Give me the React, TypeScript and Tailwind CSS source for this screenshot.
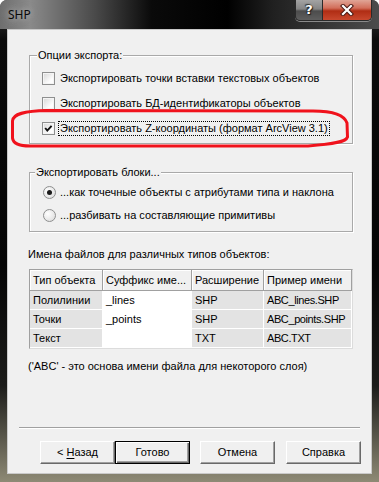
import React from 'react';

const CheckBox = ({ checked }: { checked?: boolean }) => (
  <span className="flex h-[13px] w-[13px] shrink-0 items-center justify-center border border-[#8e8f8f] bg-[linear-gradient(135deg,#d6d6d6,#fdfdfd_70%)] shadow-[inset_0_0_0_1px_#f4f4f4]">
    {checked && (
      <svg width="11" height="11" viewBox="0 0 11 11">
        <polyline points="2.2,5 4.3,7.6 8.6,2.8" fill="none" stroke="#111" strokeWidth="1.9" />
      </svg>
    )}
  </span>
);

const Radio = ({ checked }: { checked?: boolean }) => (
  <span className="flex h-[13px] w-[13px] shrink-0 items-center justify-center rounded-full border border-[#8e8f8f] bg-[radial-gradient(circle_at_35%_35%,#ffffff,#d8d8d8)]">
    {checked && <span className="h-[5px] w-[5px] rounded-full bg-[#1a1a1a]" />}
  </span>
);

const GroupBox = ({ title, indent, children, className }: { title: string; indent: string; children: React.ReactNode; className?: string }) => (
  <div className={`mx-[21px] w-[324px] border border-[#a9a9a9] shadow-[inset_1px_1px_0_#fff,1px_1px_0_#fff] ${className ?? ''}`}>
    <span className={`-mt-[7px] block w-fit bg-[#f0f0f0] px-[1px] leading-[13px] ${indent}`}>{title}</span>
    {children}
  </div>
);

const Button = ({ children, isDefault, className }: { children: React.ReactNode; isDefault?: boolean; className?: string }) => (
  <button
    className={`flex h-[23px] w-[75px] items-center justify-center bg-[#f0f0f0] ${
      isDefault
        ? 'border border-black shadow-[inset_1px_1px_0_#fff,inset_-1px_-1px_0_#696969,inset_-2px_-2px_0_#a0a0a0]'
        : 'border border-t-white border-l-white border-r-[#696969] border-b-[#696969] shadow-[inset_-1px_-1px_0_#a0a0a0]'
    } ${className ?? ''}`}
  >
    {children}
  </button>
);

const cols = ['Тип объекта', 'Суффикс име...', 'Расширение', 'Пример имени'];
const rows = [
  ['Полилинии', '_lines', 'SHP', 'ABC_lines.SHP'],
  ['Точки', '_points', 'SHP', 'ABC_points.SHP'],
  ['Текст', '', 'TXT', 'ABC.TXT'],
];

export default function App() {
  return (
    <div className="relative h-[482px] w-[379px] overflow-hidden rounded-t-[7px] bg-[linear-gradient(to_bottom,#3d3d3d_0px,#0b0b0b_40px,#050505_55%,#1c1c1a_80%,#8e8a75_100%)] font-['Liberation_Sans',Arial,sans-serif] text-[11px] text-black">
      {/* title bar */}
      <div className="flex h-[29px] bg-[linear-gradient(to_right,#6e6e6e_0%,#8a8a8a_8%,#4a4a4a_25%,#0a0a0a_40%,#000_60%,#202020_72%,#4c4c4c_100%)]">
        <span className="ml-[8px] mt-[8px] h-fit font-['Noto_Sans',sans-serif] text-[12px] leading-[14px] text-[#0a0a0a] [text-shadow:0_0_6px_#bdbdbd,0_0_10px_#9a9a9a]">
          SHP
        </span>
        <div className="ml-auto mr-[7px] flex h-[21px] overflow-hidden rounded-b-[5px] border border-t-0 border-[#2a2a2a] shadow-[0_1px_0_#8a8a8a]">
          <div className="flex w-[27px] items-center justify-center border-r border-[#2a2a2a] bg-[linear-gradient(to_bottom,#a3a3a3_0%,#858585_45%,#4c4c4c_55%,#5e5e5e_100%)] font-['DejaVu_Sans',sans-serif] text-[13px] font-bold text-white [text-shadow:0_0_1px_#000,1px_1px_1px_#222,-1px_-1px_1px_#333]">
            ?
          </div>
          <div className="flex w-[48px] items-center justify-center bg-[linear-gradient(to_bottom,#e0a596_0%,#d26e5a_40%,#b02d14_55%,#c8482e_100%)]">
            <svg width="14" height="12" viewBox="0 0 14 12">
              <path d="M3 2 L11 10 M11 2 L3 10" stroke="#4a1a14" strokeWidth="4.2" strokeLinecap="square" />
              <path d="M3 2 L11 10 M11 2 L3 10" stroke="#fff" strokeWidth="2.2" strokeLinecap="square" />
            </svg>
          </div>
        </div>
      </div>

      {/* client area */}
      <div className="mx-[7px] flex h-[445px] flex-col border border-[#c9c9c9] bg-[#f0f0f0]">
        <GroupBox title="Опции экспорта:" indent="ml-[7px]" className="mt-[25px]">
          <div className="mt-[4px] flex flex-col pb-[2px] pl-[12px]">
            <div className="flex h-[25px] items-center gap-[5px]">
              <CheckBox />
              <span>Экспортировать точки вставки текстовых объектов</span>
            </div>
            <div className="flex h-[25px] items-center gap-[5px]">
              <CheckBox />
              <span>Экспортировать БД-идентификаторы объектов</span>
            </div>
            <div className="flex h-[25px] items-center gap-[4px]">
              <CheckBox checked />
              <span className="px-[1px] leading-[13px] outline outline-1 outline-dotted outline-black">
                Экспортировать Z-координаты (формат ArcView 3.1)
              </span>
            </div>
          </div>
        </GroupBox>

        <GroupBox title="Экспортировать блоки..." indent="ml-[5px]" className="mt-[28px]">
          <div className="mt-[2px] flex flex-col pb-[4px] pl-[13px]">
            <div className="flex h-[23px] items-center gap-[4px]">
              <Radio checked />
              <span>...как точечные объекты с атрибутами типа и наклона</span>
            </div>
            <div className="flex h-[23px] items-center gap-[4px]">
              <Radio />
              <span>...разбивать на составляющие примитивы</span>
            </div>
          </div>
        </GroupBox>

        <div className="ml-[20px] mt-[16px] leading-[13px]">Имена файлов для различных типов объектов:</div>

        <div className="ml-[21px] mt-[8px] w-[324px] border border-[#a0a0a0] border-b-[#dcdcdc] border-r-[#dcdcdc]">
          <div className="grid grid-cols-[73px_89px_72px_88px]">
            {cols.map((c) => (
              <div
                key={c}
                className="flex h-[21px] items-center overflow-hidden whitespace-nowrap border-b border-r border-[#a0a0a0] bg-[#f0f0f0] pl-[3px] shadow-[inset_1px_1px_0_#fff]"
              >
                {c}
              </div>
            ))}
            {rows.map((r) =>
              r.map((c, i) => (
                <div
                  key={r[0] + i}
                  className={`flex h-[19px] items-center overflow-hidden whitespace-nowrap border-b border-r border-white pl-[3px] ${
                    i === 1 ? 'bg-white' : 'bg-[#e3e3e3]'
                  } ${i === 3 ? 'tracking-[-0.4px]' : ''}`}
                >
                  {c}
                </div>
              ))
            )}
          </div>
        </div>

        <div className="ml-[20px] mt-[11px] leading-[13px]">('ABC' - это основа имени файла для некоторого слоя)</div>

        <div className="mx-[11px] mt-auto border-t border-b border-t-[#a0a0a0] border-b-white" />

        <div className="mb-[9px] mt-[12px] flex justify-end pr-[10px]">
          <Button>
            &lt; <span className="ml-[3px] underline underline-offset-2">Н</span>азад
          </Button>
          <Button isDefault>Готово</Button>
          <Button className="ml-[10px]">Отмена</Button>
          <Button className="ml-[11px]">Справка</Button>
        </div>
      </div>

      {/* red annotation */}
      <svg className="pointer-events-none absolute inset-0" width="379" height="482" viewBox="0 0 379 482">
        <path
          d="M47 110.5 L313 111 C332 111 344 114 347 123 L347.5 137 C346 142 334 144 308 146 L30 146 C19 146 13 143 12.5 138 L12.5 121 C13 114 24 111 47 110.5 Z"
          fill="none"
          stroke="#f0121c"
          strokeWidth="3"
        />
      </svg>
    </div>
  );
}
